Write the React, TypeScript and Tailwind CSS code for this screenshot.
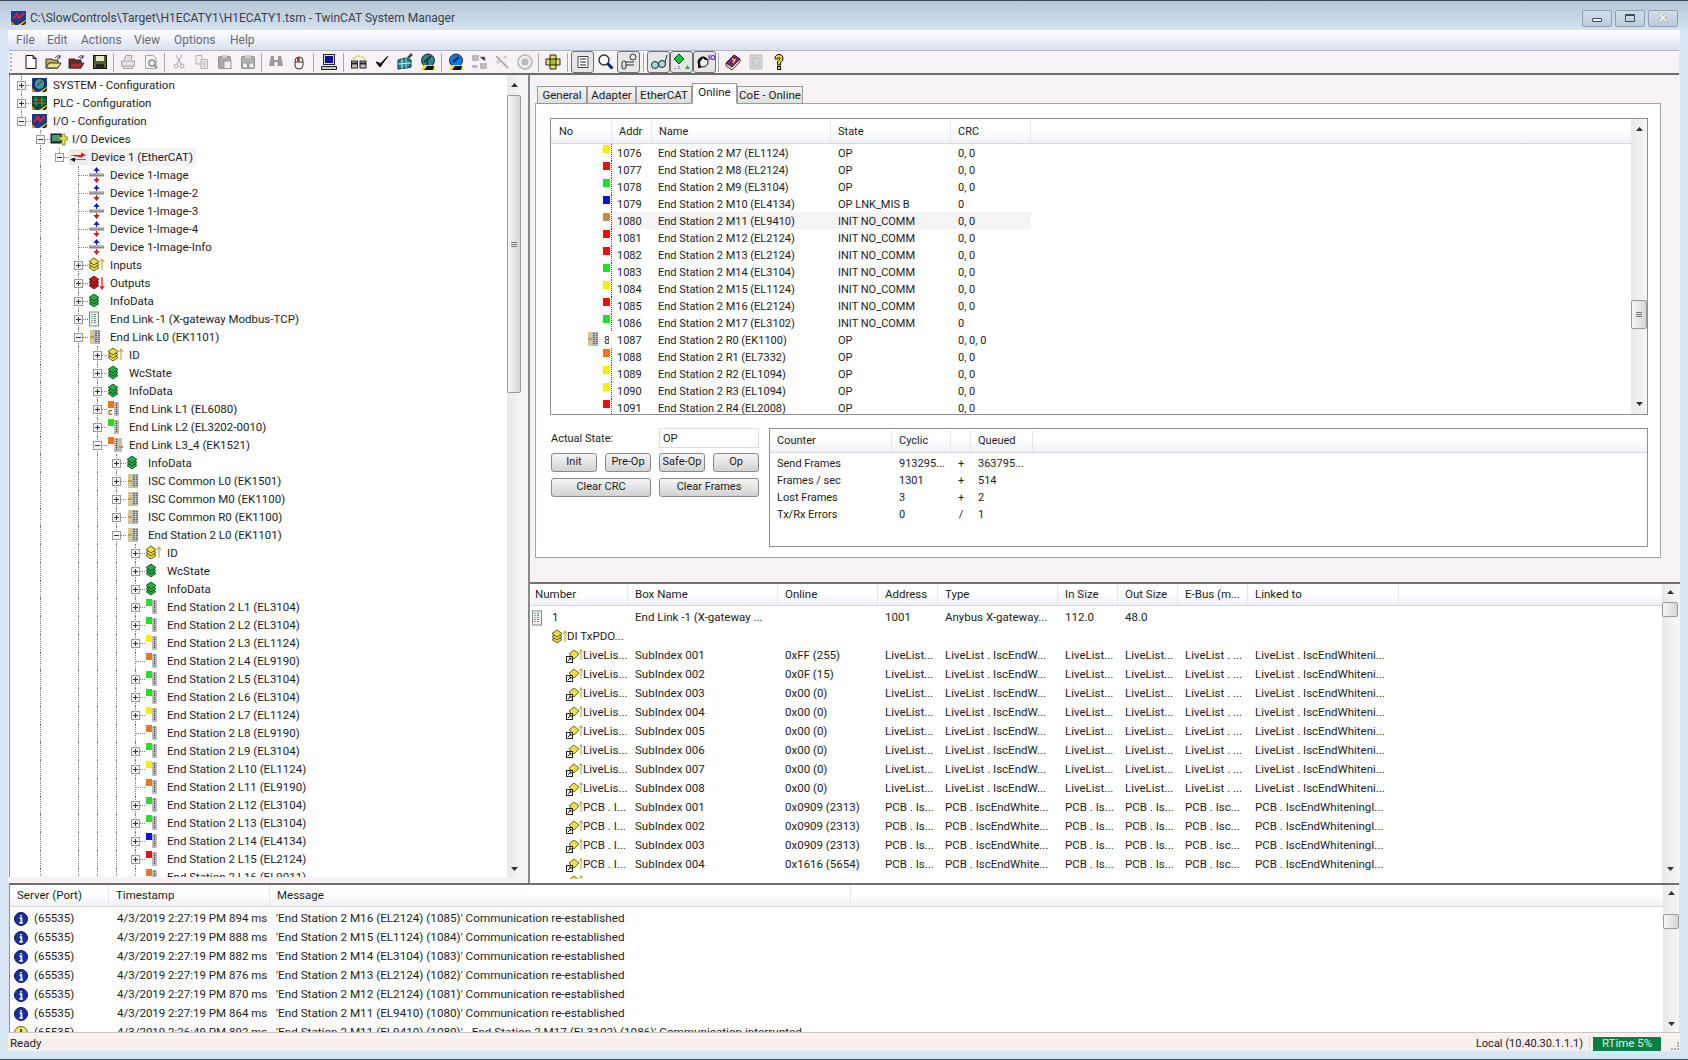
import type { ReactNode } from "react";

type TreeRow = { l: number; t: string; e?: "+" | "-"; i: string };

const st = (n: number, chip: string, part: string, e: boolean = true): TreeRow => ({ l: 6, t: `End Station 2 L${n} (${part})`, e: e ? "+" : undefined, i: chip });

const tree: TreeRow[] = [
  { l: 0, t: "SYSTEM - Configuration", e: "+", i: "system" },
  { l: 0, t: "PLC - Configuration", e: "+", i: "plc" },
  { l: 0, t: "I/O - Configuration", e: "-", i: "io" },
  { l: 1, t: "I/O Devices", e: "-", i: "devices" },
  { l: 2, t: "Device 1 (EtherCAT)", e: "-", i: "ethercat" },
  { l: 3, t: "Device 1-Image", i: "image" },
  { l: 3, t: "Device 1-Image-2", i: "image" },
  { l: 3, t: "Device 1-Image-3", i: "image" },
  { l: 3, t: "Device 1-Image-4", i: "image" },
  { l: 3, t: "Device 1-Image-Info", i: "image" },
  { l: 3, t: "Inputs", e: "+", i: "inputs" },
  { l: 3, t: "Outputs", e: "+", i: "outputs" },
  { l: 3, t: "InfoData", e: "+", i: "green" },
  { l: 3, t: "End Link -1 (X-gateway Modbus-TCP)", e: "+", i: "gateway" },
  { l: 3, t: "End Link L0 (EK1101)", e: "-", i: "mod" },
  { l: 4, t: "ID", e: "+", i: "inputs" },
  { l: 4, t: "WcState", e: "+", i: "green" },
  { l: 4, t: "InfoData", e: "+", i: "green" },
  { l: 4, t: "End Link L1 (EL6080)", e: "+", i: "coupler" },
  { l: 4, t: "End Link L2 (EL3202-0010)", e: "+", i: "#22e022" },
  { l: 4, t: "End Link L3_4 (EK1521)", e: "-", i: "fiber" },
  { l: 5, t: "InfoData", e: "+", i: "green" },
  { l: 5, t: "ISC Common L0 (EK1501)", e: "+", i: "mod" },
  { l: 5, t: "ISC Common M0 (EK1100)", e: "+", i: "mod" },
  { l: 5, t: "ISC Common R0 (EK1100)", e: "+", i: "mod" },
  { l: 5, t: "End Station 2 L0 (EK1101)", e: "-", i: "mod" },
  { l: 6, t: "ID", e: "+", i: "inputs" },
  { l: 6, t: "WcState", e: "+", i: "green" },
  { l: 6, t: "InfoData", e: "+", i: "green" },
  st(1, "#22e022", "EL3104"),
  st(2, "#22e022", "EL3104"),
  st(3, "#f5f000", "EL1124"),
  st(4, "#f97316", "EL9190", false),
  st(5, "#22e022", "EL3104"),
  st(6, "#22e022", "EL3104"),
  st(7, "#f5f000", "EL1124"),
  st(8, "#f97316", "EL9190", false),
  st(9, "#22e022", "EL3104"),
  st(10, "#f5f000", "EL1124"),
  st(11, "#f97316", "EL9190", false),
  st(12, "#22e022", "EL3104"),
  st(13, "#22e022", "EL3104"),
  st(14, "#1010e0", "EL4134"),
  st(15, "#e81010", "EL2124"),
  st(16, "#f97316", "EL9011", false),
];

const openAtEnd = [1, 3, 4, 5, 6];

const hasLater = (i: number, l: number) => {
  for (let j = i + 1; j < tree.length; j++) {
    if (tree[j].l < l) return false;
    if (tree[j].l === l) return true;
  }
  return openAtEnd.includes(l);
};

const slaves: [string, string, string, string, string][] = [
  ["#f5f000", "1076", "End Station 2 M7 (EL1124)", "OP", "0, 0"],
  ["#e81010", "1077", "End Station 2 M8 (EL2124)", "OP", "0, 0"],
  ["#22e022", "1078", "End Station 2 M9 (EL3104)", "OP", "0, 0"],
  ["#1010e0", "1079", "End Station 2 M10 (EL4134)", "OP LNK_MIS B", "0"],
  ["#c08a50", "1080", "End Station 2 M11 (EL9410)", "INIT NO_COMM", "0, 0"],
  ["#e81010", "1081", "End Station 2 M12 (EL2124)", "INIT NO_COMM", "0, 0"],
  ["#e81010", "1082", "End Station 2 M13 (EL2124)", "INIT NO_COMM", "0, 0"],
  ["#22e022", "1083", "End Station 2 M14 (EL3104)", "INIT NO_COMM", "0, 0"],
  ["#f5f000", "1084", "End Station 2 M15 (EL1124)", "INIT NO_COMM", "0, 0"],
  ["#e81010", "1085", "End Station 2 M16 (EL2124)", "INIT NO_COMM", "0, 0"],
  ["#22e022", "1086", "End Station 2 M17 (EL3102)", "INIT NO_COMM", "0"],
  ["mod", "1087", "End Station 2 R0 (EK1100)", "OP", "0, 0, 0"],
  ["#f97316", "1088", "End Station 2 R1 (EL7332)", "OP", "0, 0"],
  ["#f5f000", "1089", "End Station 2 R2 (EL1094)", "OP", "0, 0"],
  ["#f5f000", "1090", "End Station 2 R3 (EL1094)", "OP", "0, 0"],
  ["#e81010", "1091", "End Station 2 R4 (EL2008)", "OP", "0, 0"],
];

const lowerCols = ["w-[98px]", "w-[150px]", "w-[100px]", "w-[60px]", "w-[120px]", "w-[60px]", "w-[60px]", "w-[70px]", "w-[151px]"];
const lowerHead = ["Number", "Box Name", "Online", "Address", "Type", "In Size", "Out Size", "E-Bus (m...", "Linked to"];

const live = (n: number, online: string) => [`SubIndex 00${n}`, online, "LiveList...", "LiveList . IscEndW...", "LiveList...", "LiveList...", "LiveList . ...", "LiveList . IscEndWhiteni..."];
const pcb = (n: number, online: string) => [`SubIndex 00${n}`, online, "PCB . Is...", "PCB . IscEndWhite...", "PCB . Is...", "PCB . Is...", "PCB . Isc...", "PCB . IscEndWhiteningI..."];

const vars: [string, string[]][] = [
  ["LiveLis...", live(1, "0xFF (255)")],
  ["LiveLis...", live(2, "0x0F (15)")],
  ["LiveLis...", live(3, "0x00 (0)")],
  ["LiveLis...", live(4, "0x00 (0)")],
  ["LiveLis...", live(5, "0x00 (0)")],
  ["LiveLis...", live(6, "0x00 (0)")],
  ["LiveLis...", live(7, "0x00 (0)")],
  ["LiveLis...", live(8, "0x00 (0)")],
  ["PCB . I...", pcb(1, "0x0909 (2313)")],
  ["PCB . I...", pcb(2, "0x0909 (2313)")],
  ["PCB . I...", pcb(3, "0x0909 (2313)")],
  ["PCB . I...", pcb(4, "0x1616 (5654)")],
];

const logs: [string, string][] = [
  ["894", "'End Station 2 M16 (EL2124) (1085)' Communication re-established"],
  ["888", "'End Station 2 M15 (EL1124) (1084)' Communication re-established"],
  ["882", "'End Station 2 M14 (EL3104) (1083)' Communication re-established"],
  ["876", "'End Station 2 M13 (EL2124) (1082)' Communication re-established"],
  ["870", "'End Station 2 M12 (EL2124) (1081)' Communication re-established"],
  ["864", "'End Station 2 M11 (EL9410) (1080)' Communication re-established"],
];

const counters = [
  ["Send Frames", "913295...", "+", "363795..."],
  ["Frames / sec", "1301", "+", "514"],
  ["Lost Frames", "3", "+", "2"],
  ["Tx/Rx Errors", "0", "/", "1"],
];

const Stack = ({ color, dark, arrow }: { color: string; dark: string; arrow?: string }) => (
  <svg width="18" height="16" viewBox="0 0 18 16">
    {[6, 3, 0].map((y) => (
      <path key={y} d={`M6 ${y + 1} L11 ${y + 4.5} L6 ${y + 8} L1 ${y + 4.5} Z`} fill={color} stroke={dark} strokeWidth="0.8" />
    ))}
    {arrow && <path d={arrow === "#c8b040" ? "M14 13 V3 M12 5 L14 2 L16 5" : "M14 2 V13 M12 11 L14 14 L16 11"} stroke={arrow} strokeWidth="1.2" fill="none" />}
  </svg>
);

const ModIcon = () => (
  <svg width="18" height="16" viewBox="0 0 18 16">
    <rect x="2" y="1" width="4" height="14" fill="#d8c78c" />
    <rect x="6" y="1" width="6" height="14" fill="#b9b9b9" />
    <path d="M8 2 V14 M11 2 V14" stroke="#333" strokeWidth="1.2" strokeDasharray="1 1" />
    <rect x="2" y="7" width="4" height="2" fill="#b0a060" />
  </svg>
);

const GatewayIcon = () => (
  <svg width="18" height="16" viewBox="0 0 18 16">
    <rect x="1.5" y="1" width="9" height="14" fill="#eef2ee" stroke="#808a80" />
    <path d="M4 3 V13" stroke="#1ca04a" strokeWidth="1.2" strokeDasharray="1 1" />
    <path d="M7 3 V13" stroke="#333" strokeWidth="1.2" strokeDasharray="1 1" />
  </svg>
);

const Chip = ({ color, mark }: { color: string; mark?: string }) => (
  <svg width="18" height="16" viewBox="0 0 18 16">
    <rect x="1" y="0" width="6" height="7" fill={color} />
    <rect x="7" y="1" width={mark === "fiber" ? 8 : 5} height="14" fill="#bdbdbd" />
    <path d="M9.5 2 V14" stroke="#333" strokeWidth="1.2" strokeDasharray="1 1" />
    {mark === "c" && <text x="1" y="14" fontSize="9" fill="#111" fontFamily="Liberation Sans">c</text>}
    {mark === "fiber" && <path d="M12 10 H16" stroke="#d09000" strokeWidth="2" />}
  </svg>
);

const TcIcon = ({ kind }: { kind: string }) => (
  <svg width="18" height="16" viewBox="0 0 18 16">
    <rect x="1" y="1" width="15" height="14" fill={kind === "plc" ? "#0b4a30" : "#1c3a8a"} />
    {kind === "system" && <circle cx="8.5" cy="7" r="5.5" fill="#2aa0a8" stroke="#111" />}
    {kind === "system" && <path d="M6 9 L11 4" stroke="#d01818" strokeWidth="1.5" />}
    {kind === "plc" && <path d="M2 5 H15 M2 8 H15 M5 2 V11 M11 2 V11" stroke="#28b85a" strokeWidth="1.2" />}
    {kind === "plc" && <path d="M3 8 L8 5 L13 8" stroke="#e01818" strokeWidth="1.2" fill="none" />}
    {kind === "io" && <path d="M3 9 L7 4 L9 8 L14 3" stroke="#f02020" strokeWidth="2" fill="none" />}
    <path d="M8 15 L16 15 L16 10 Z" fill="#f5e000" />
    <path d="M1 15 L1 11 L5 15 Z" fill="#e09010" />
    <path d="M11 15 L16 11 L16 13 L14 15 Z" fill="#111" />
  </svg>
);

const DevicesIcon = () => (
  <svg width="18" height="16" viewBox="0 0 18 16">
    <rect x="1" y="3" width="10" height="9" fill="#0d5a34" stroke="#111" />
    <path d="M2 5 H10 M2 7 H10 M2 9 H10" stroke="#9ad5ae" />
    <path d="M9 6 H12 V3 H15 V6 H18 V9 H15 V14 H12 V9 H9 Z" fill="#e8e040" stroke="#555" strokeWidth="0.6" />
  </svg>
);

const EthercatIcon = () => (
  <svg width="18" height="16" viewBox="0 0 18 16">
    <path d="M1 6 H12 V3.5 L17 6 L12 8.5 Z" fill="#e01818" />
    <path d="M17 10.5 H6 V8.5 L1 10.5 L6 13 V11 H17 Z" fill="#111" />
  </svg>
);

const ImageIcon = () => (
  <svg width="18" height="16" viewBox="0 0 18 16">
    <rect x="1" y="6.5" width="15" height="3" fill="#8a8a8a" />
    <rect x="1" y="6.5" width="15" height="1" fill="#c4c4c4" />
    <path d="M8.5 6 V3 M6.5 3.5 L8.5 1 L10.5 3.5 Z" stroke="#1818d0" fill="#1818d0" strokeWidth="1.2" />
    <path d="M8.5 10 V13 M6.5 12.5 L8.5 15 L10.5 12.5 Z" stroke="#d01818" fill="#d01818" strokeWidth="1.2" />
  </svg>
);

const nodeIcon = (i: string): ReactNode => {
  if (i.startsWith("#")) return <Chip color={i} />;
  if (i === "coupler") return <Chip color="#f97316" mark="c" />;
  if (i === "fiber") return <Chip color="#f97316" mark="fiber" />;
  if (i === "system" || i === "plc" || i === "io") return <TcIcon kind={i} />;
  if (i === "devices") return <DevicesIcon />;
  if (i === "ethercat") return <EthercatIcon />;
  if (i === "image") return <ImageIcon />;
  if (i === "inputs") return <Stack color="#eee040" dark="#3a3418" arrow="#c8b040" />;
  if (i === "outputs") return <Stack color="#d01818" dark="#3a0808" arrow="#e01010" />;
  if (i === "green") return <Stack color="#22b040" dark="#083a16" />;
  if (i === "gateway") return <GatewayIcon />;
  return <ModIcon />;
};

const Expander = ({ kind }: { kind: "+" | "-" }) => (
  <svg width="9" height="9" viewBox="0 0 9 9" className="absolute left-[5px] top-[5px]">
    <rect x="0.5" y="0.5" width="8" height="8" fill="#f4f4f4" stroke="#9a9a9a" />
    <path d="M2 4.5 H7" stroke="#333" />
    {kind === "+" && <path d="M4.5 2 V7" stroke="#333" />}
  </svg>
);

const Arrow = ({ up }: { up?: boolean }) => (
  <div className="h-[16px] flex items-center justify-center">
    <svg width="7" height="4" viewBox="0 0 7 4">
      <path d={up ? "M0 4 L3.5 0 L7 4 Z" : "M0 0 L3.5 4 L7 0 Z"} fill="#333" />
    </svg>
  </div>
);

const ScrollBar = ({ thumb, size, width, pad, grip }: { thumb: string; size: string; width: string; pad?: string; grip?: boolean }) => (
  <div className={`${width} ${pad ?? ""} shrink-0 bg-gradient-to-r from-[#e8e8e8] to-[#f6f6f6] flex flex-col`}>
    <Arrow up />
    <div className="flex-1">
      <div className={`${thumb} ${size} border border-[#9a9a9a] rounded-[2px] bg-gradient-to-r from-[#f8f8f8] to-[#d4d4d4] flex flex-col items-center justify-center gap-[1px]`}>
        {grip && (
          <>
            <div className="w-[6px] h-[1px] bg-[#777]" />
            <div className="w-[6px] h-[1px] bg-[#777]" />
            <div className="w-[6px] h-[1px] bg-[#777]" />
          </>
        )}
      </div>
    </div>
    <Arrow />
  </div>
);

const Tree = () => (
  <div className="flex-1 overflow-hidden bg-white pt-[1px]">
    {tree.map((r, i) => (
      <div key={i} className="flex h-[18px] pl-[2px] items-center">
        {Array.from({ length: r.l }).map((_, k) => (
          <div key={k} className="w-[19px] h-full shrink-0 flex justify-center">
            {hasLater(i, k) && <div className="h-full border-l border-dotted border-[#808080]" />}
          </div>
        ))}
        <div className="relative w-[19px] h-full shrink-0">
          <div className={`absolute left-[9px] top-0 border-l border-dotted border-[#808080] ${hasLater(i, r.l) ? "h-[18px]" : "h-[9px]"}`} />
          <div className="absolute left-[9px] top-[9px] w-[10px] border-t border-dotted border-[#808080]" />
          {r.e && <Expander kind={r.e} />}
        </div>
        <div className={`w-[18px] h-[16px] shrink-0 ${r.i === "ethercat" ? "bg-[#eceaec]" : ""}`}>{nodeIcon(r.i)}</div>
        <span className={`pl-[4px] pr-[3px] leading-[18px] whitespace-nowrap ${r.i === "ethercat" ? "bg-[#f4f2f4]" : ""}`}>{r.t}</span>
      </div>
    ))}
  </div>
);

const HeadCell = ({ w, pl, children }: { w: string; pl?: string; children?: ReactNode }) => (
  <div className={`${w} ${pl ?? "pl-[7px]"} shrink-0 h-full flex items-center border-r border-[#e6e6e8] whitespace-nowrap`}>{children}</div>
);

const btn = "h-[19px] border border-[#8a8a8a] rounded-[3px] bg-gradient-to-b from-[#f6f6f6] to-[#d2d2d2] flex items-center justify-center";

const SlaveList = () => (
  <div className="h-[297px] border border-[#8f8f8f] flex text-[11px]">
    <div className="flex-1 flex flex-col overflow-hidden">
      <div className="h-[25px] shrink-0 pt-[2px] flex bg-gradient-to-b from-white from-[40%] to-[#f1f2f8] border-b border-[#d8d8dc]">
        <HeadCell w="w-[61px]"><span className="pl-[1px]">No</span></HeadCell>
        <HeadCell w="w-[40px]">Addr</HeadCell>
        <HeadCell w="w-[179px]">Name</HeadCell>
        <HeadCell w="w-[120px]">State</HeadCell>
        <HeadCell w="w-[80px]">CRC</HeadCell>
      </div>
      {slaves.map(([icon, addr, name, state, crc]) => (
        <div key={addr} className="h-[17px] shrink-0 flex">
          <div className="w-[61px] shrink-0 flex justify-end">
            {icon === "mod" ? (
              <div className="flex h-[17px] mr-[3px] leading-[19px]">
                <ModIcon />
                <span className="w-[5px] overflow-hidden">8</span>
              </div>
            ) : (
              <div className="flex">
                <div className="w-[7px] h-[8px] mt-[1px]" style={{ background: icon }} />
                <div className="h-full ml-[1px] border-l border-dotted border-[#444]" />
              </div>
            )}
          </div>
          <div className={`flex ${addr === "1080" ? "bg-[#f6f3f5]" : ""}`}>
            <div className="w-[40px] pl-[5px] leading-[19px]">{addr}</div>
            <div className="w-[179px] pl-[6px] leading-[19px] whitespace-nowrap">{name}</div>
            <div className="w-[120px] pl-[7px] leading-[19px] whitespace-nowrap">{state}</div>
            <div className="w-[80px] pl-[7px] leading-[19px]">{crc}</div>
          </div>
        </div>
      ))}
    </div>
    <ScrollBar width="w-[16px]" pad="pt-[2px] pb-[2px]" thumb="mt-[163px]" size="h-[29px]" grip />
  </div>
);

const Controls = () => (
  <div className="flex mt-[13px] text-[11px]">
    <div className="w-[208px] ml-[1px] shrink-0">
      <div className="flex items-center h-[20px]">
        <span className="w-[108px] pt-[2px]">Actual State:</span>
        <div className="w-[100px] h-[20px] border border-[#dcdcdc] pl-[3px] pt-[2px] flex items-center">OP</div>
      </div>
      <div className="grid grid-cols-4 gap-x-[8px] mt-[5px]">
        <div className={btn}>Init</div>
        <div className={btn}>Pre-Op</div>
        <div className={btn}>Safe-Op</div>
        <div className={btn}>Op</div>
      </div>
      <div className="grid grid-cols-2 gap-x-[8px] mt-[6px]">
        <div className={btn}>Clear CRC</div>
        <div className={btn}>Clear Frames</div>
      </div>
    </div>
    <div className="ml-[10px] flex-1 h-[119px] border border-[#8f8f8f]">
      <div className="h-[24px] pt-[2px] flex bg-gradient-to-b from-white from-[40%] to-[#f1f2f8] border-b border-[#d8d8dc]">
        <HeadCell w="w-[122px]">Counter</HeadCell>
        <HeadCell w="w-[59px]">Cyclic</HeadCell>
        <HeadCell w="w-[20px]" />
        <HeadCell w="w-[62px]">Queued</HeadCell>
      </div>
      <div className="pt-[2px]">
        {counters.map(([a, b, c, d]) => (
          <div key={a} className="flex h-[17px] leading-[17px]">
            <div className="w-[122px] pl-[7px]">{a}</div>
            <div className="w-[59px] pl-[7px]">{b}</div>
            <div className="w-[20px] text-center">{c}</div>
            <div className="w-[62px] pl-[7px]">{d}</div>
          </div>
        ))}
      </div>
    </div>
  </div>
);

const Tabs = () => (
  <div className="flex items-end h-[21px] ml-[2px] relative top-[1px]">
    {["General", "Adapter", "EtherCAT"].map((t, i) => (
      <div key={t} className={`h-[18px] pt-[1px] ${["w-[50px]", "w-[49px]", "w-[56px]"][i]} border border-[#9a9a9a] bg-gradient-to-b from-[#f4f4f4] to-[#dedede] flex items-center justify-center`}>{t}</div>
    ))}
    <div className="h-[21px] w-[45px] border border-[#9a9a9a] border-b-white bg-white flex items-center justify-center pb-[2px]">Online</div>
    <div className="h-[18px] pt-[1px] w-[66px] border border-[#9a9a9a] bg-gradient-to-b from-[#f4f4f4] to-[#dedede] flex items-center justify-center">CoE - Online</div>
  </div>
);

const VarIcon = () => (
  <svg width="18" height="16" viewBox="0 0 18 16" className="shrink-0">
    <path d="M9 2 L14 6 L9 11 L4 6 Z" fill="#eee040" stroke="#4a4420" strokeWidth="0.8" />
    <rect x="1.5" y="8.5" width="6" height="6" fill="#fff" stroke="#222" />
    <path d="M3 13 L6 10 M4 10 H6 V12" stroke="#222" fill="none" />
    <path d="M16 12 V2 M14.5 4 L16 1.5 L17.5 4" stroke="#b8a030" fill="none" />
  </svg>
);

const LowerTable = () => (
  <div className="h-[301px] border-t-2 border-[#707070] bg-white flex">
    <div className="flex-1 overflow-hidden">
      <div className="h-[22px] flex bg-gradient-to-b from-white from-[40%] to-[#f1f2f8] border-b border-[#d8d8dc]">
        {lowerHead.map((h, i) => <HeadCell key={h} w={lowerCols[i]} pl={i === 0 ? "pl-[5px]" : undefined}>{h}</HeadCell>)}
      </div>
      <div className="h-[19px] mt-[2px] flex items-center whitespace-nowrap">
        <div className={`${lowerCols[0]} flex items-center pl-[1px]`}>
          <div className="w-[21px] h-[16px] overflow-hidden"><GatewayIcon /></div>
          <span>1</span>
        </div>
        <div className={`${lowerCols[1]} pl-[7px]`}>End Link -1 (X-gateway ...</div>
        <div className={lowerCols[2]} />
        <div className={`${lowerCols[3]} pl-[7px]`}>1001</div>
        <div className={`${lowerCols[4]} pl-[7px]`}>Anybus X-gateway...</div>
        <div className={`${lowerCols[5]} pl-[7px]`}>112.0</div>
        <div className={`${lowerCols[6]} pl-[7px]`}>48.0</div>
      </div>
      <div className="h-[19px] flex items-center pl-[21px] whitespace-nowrap">
        <div className="w-[16px] h-[16px] overflow-hidden"><Stack color="#eee040" dark="#3a3418" arrow="#c8b040" /></div>
        <span>DI TxPDO...</span>
      </div>
      {vars.map(([name, cells], i) => (
        <div key={i} className="h-[19px] flex items-center whitespace-nowrap">
          <div className={`${lowerCols[0]} flex items-center pl-[35px]`}>
            <VarIcon />
            <span>{name}</span>
          </div>
          {cells.map((c, k) => (
            <div key={k} className={`${lowerCols[k + 1]} pl-[7px]`}>{c}</div>
          ))}
        </div>
      ))}
      <div className="h-[5px] pl-[35px] overflow-hidden"><VarIcon /></div>
    </div>
    <ScrollBar width="w-[16px]" pad="pb-[6px]" thumb="mt-[2px]" size="h-[15px]" />
    <div className="w-[2px] bg-[#f6f2f5]" />
  </div>
);

const InfoIcon = ({ warn }: { warn?: boolean }) => (
  <svg width="14" height="14" viewBox="0 0 14 14" className="shrink-0">
    <circle cx="7" cy="7" r="6.5" fill={warn ? "#f5ea50" : "#1a2fa0"} stroke={warn ? "#555" : "#0a1560"} />
    {warn ? <path d="M7 3 V8 M7 10 V11" stroke="#222" strokeWidth="1.6" /> : <path d="M7 3 V4.6 M5.6 6.2 H7.4 V10.4 M5.4 10.8 H8.8" stroke="#fff" strokeWidth="1.7" fill="none" />}
  </svg>
);

const LogRow = ({ warn, time, msg }: { warn?: boolean; time: string; msg: string }) => (
  <div className="h-[19px] shrink-0 flex items-center whitespace-nowrap">
    <div className="w-[99px] flex items-center pl-[4px] gap-[6px]">
      <InfoIcon warn={warn} />
      <span>(65535)</span>
    </div>
    <div className="w-[161px] pl-[8px]">{time}</div>
    <div className="pl-[6px] text-[11.7px]">{msg}</div>
  </div>
);

const Log = () => (
  <div className="h-[149px] flex border-t-2 border-[#707070] ml-[1px] mr-[1px] border-l border-l-[#8f8f8f] bg-white">
    <div className="flex-1 overflow-hidden flex flex-col">
      <div className="h-[22px] shrink-0 flex bg-gradient-to-b from-white from-[40%] to-[#f1f2f8] border-b border-[#d8d8dc]">
        <HeadCell w="w-[99px]">Server (Port)</HeadCell>
        <HeadCell w="w-[161px]">Timestamp</HeadCell>
        <HeadCell w="w-[581px]">Message</HeadCell>
      </div>
      <div className="h-[2px] shrink-0" />
      {logs.map(([ms, m]) => <LogRow key={ms} time={`4/3/2019 2:27:19 PM ${ms} ms`} msg={m} />)}
      <LogRow warn time="4/3/2019 2:26:49 PM 892 ms" msg="'End Station 2 M11 (EL9410) (1080)' - End Station 2 M17 (EL3102) (1086)' Communication interrupted" />
    </div>
    <ScrollBar width="w-[16px]" thumb="mt-[13px]" size="h-[15px]" />
  </div>
);

const ToolIcon = ({ name }: { name: string }) => {
  switch (name) {
    case "new": return <svg width="16" height="16" viewBox="0 0 16 16"><path d="M3 1.5 H10 L13 4.5 V14.5 H3 Z M10 1.5 V4.5 H13" fill="#fff" stroke="#111" /></svg>;
    case "open": return <svg width="18" height="16" viewBox="0 0 18 16"><path d="M1 14 V5 H7 V6 H13 V14 Z" fill="#b9b258" stroke="#333" /><path d="M1 14 L4 9 H16 L13 14 Z" fill="#e8e28c" stroke="#333" /><path d="M10 4 Q13 0 15 3 M15 1 V4 H12" stroke="#333" fill="none" /></svg>;
    case "open2": return <svg width="18" height="16" viewBox="0 0 18 16"><path d="M1 14 V5 H7 V6 H13 V14 Z" fill="#7a1c20" stroke="#333" /><path d="M1 14 L4 9 H16 L13 14 Z" fill="#b02a30" stroke="#333" /><path d="M10 4 Q13 0 15 3 M15 1 V4 H12" stroke="#333" fill="none" /></svg>;
    case "save": return <svg width="16" height="16" viewBox="0 0 16 16"><rect x="1.5" y="1.5" width="13" height="13" fill="#556030" stroke="#111" /><rect x="4" y="2" width="8" height="5" fill="#e8e8c8" /><rect x="4" y="10" width="8" height="4.5" fill="#222" /></svg>;
    case "print": return <svg width="16" height="16" viewBox="0 0 16 16"><path d="M4 6 L6 1.5 H12 L11 6 M1.5 7 H14.5 V12 H1.5 Z M3.5 12 V14.5 H12.5 V12" fill="#e4e4e4" stroke="#a0a0a0" /></svg>;
    case "preview": return <svg width="16" height="16" viewBox="0 0 16 16"><path d="M2.5 1.5 H10 L13 4 V14.5 H2.5 Z" fill="#f4f4f4" stroke="#a8a8a8" /><circle cx="9" cy="9" r="3" fill="none" stroke="#909090" strokeWidth="1.5" /><path d="M11 11 L14 14" stroke="#909090" strokeWidth="2" /></svg>;
    case "cut": return <svg width="14" height="16" viewBox="0 0 14 16"><path d="M4 1 L9 10 M10 1 L5 10" stroke="#a8a8a8" /><circle cx="4" cy="12" r="2" fill="none" stroke="#a8a8a8" /><circle cx="10" cy="12" r="2" fill="none" stroke="#a8a8a8" /></svg>;
    case "copy": return <svg width="16" height="16" viewBox="0 0 16 16"><path d="M2 1.5 H8 V10 H2 Z" fill="#eee" stroke="#b0b0b0" /><path d="M7 5.5 H13.5 V14.5 H7 Z M8.5 8 H12 M8.5 10 H12 M8.5 12 H12" fill="#eee" stroke="#b0b0b0" /></svg>;
    case "paste": return <svg width="16" height="16" viewBox="0 0 16 16"><rect x="1.5" y="2.5" width="12" height="12" rx="1" fill="#a8a8a8" stroke="#909090" /><rect x="5" y="1" width="5" height="3" fill="#ccc" /><rect x="7" y="7" width="7" height="7.5" fill="#eee" stroke="#999" /></svg>;
    case "paste2": return <svg width="16" height="16" viewBox="0 0 16 16"><rect x="1.5" y="2.5" width="13" height="12" rx="1" fill="#b0b0b0" stroke="#909090" /><rect x="5" y="1" width="6" height="3" fill="#ccc" /><rect x="2.5" y="9" width="5" height="5" fill="#eee" stroke="#999" /><rect x="9" y="9" width="5" height="5" fill="#eee" stroke="#999" /></svg>;
    case "find": return <svg width="16" height="16" viewBox="0 0 16 16"><path d="M3 2 H6 V6 H10 V2 H13 L15 12 H9.5 V8 H6.5 V12 H1 Z" fill="#9a9a9a" /></svg>;
    case "mouse": return <svg width="14" height="16" viewBox="0 0 14 16"><rect x="3" y="3" width="8" height="12" rx="4" fill="#fff" stroke="#333" /><path d="M3 8 H11 M7 3 V8" stroke="#333" /><rect x="5" y="3.5" width="2" height="4" fill="#c82020" /></svg>;
    case "monitor": return <svg width="18" height="18" viewBox="0 0 18 18"><rect x="3.5" y="1.5" width="11" height="10" fill="#ddd" stroke="#222" /><rect x="5" y="3" width="8" height="7" fill="#1010a0" /><path d="M1.5 13.5 H16.5 V16.5 H1.5 Z" fill="#ccc" stroke="#222" /></svg>;
    case "blocks": return <svg width="18" height="16" viewBox="0 0 18 16"><rect x="1.5" y="7" width="6" height="7" fill="#c4c0a0" stroke="#222040" /><rect x="10" y="7" width="6" height="7" fill="#c4c0a0" stroke="#222040" /><path d="M1.5 9.5 H7.5 M10 9.5 H16" stroke="#222040" strokeWidth="2" /><path d="M3 5 Q9 -1 15 5" stroke="#d0d020" strokeDasharray="2 1" fill="none" strokeWidth="1.5" /></svg>;
    case "check": return <svg width="16" height="16" viewBox="0 0 16 16"><path d="M2 8 L6 13 L14 2 L6.5 9.5 Z" fill="#111" stroke="#111" /></svg>;
    case "gear": return <svg width="18" height="18" viewBox="0 0 18 18"><path d="M2 7 L10 5 V15 L2 16 Z M10 5 L15 7 V14 L10 15" fill="#1f8a90" stroke="#123" /><path d="M2 11 L15 10 M6 6 V16 M10 5 V15" stroke="#bfe" /><path d="M12 5 L16 1" stroke="#444" strokeWidth="2.5" /></svg>;
    case "tc": return <svg width="18" height="18" viewBox="0 0 18 18"><circle cx="9" cy="7.5" r="6.5" fill="#1f8a90" stroke="#222" /><path d="M5 9 L12 3 M8 13 L9 5" stroke="#222" strokeWidth="1.5" /><path d="M2 17 L5 12 H15 L17 17 Z" fill="#f5e000" /><path d="M5 17 L8 13 H15 L14 17 Z" fill="#111" /></svg>;
    case "globe": return <svg width="18" height="18" viewBox="0 0 18 18"><circle cx="9" cy="7.5" r="6.5" fill="#1878d8" stroke="#102060" /><path d="M6 9 L12 4" stroke="#102060" strokeWidth="2" /><path d="M2 17 L5 12 H15 L17 17 Z" fill="#f5e000" /><path d="M5 17 L8 13 H15 L14 17 Z" fill="#111" /></svg>;
    case "net": return <svg width="18" height="16" viewBox="0 0 18 16"><rect x="2" y="1" width="7" height="6" fill="#bbb" /><rect x="10" y="9" width="7" height="6" fill="#bbb" /><rect x="2" y="11" width="5" height="3" fill="#bbb" /><path d="M10 3 H15 V7 M8 12 H5" stroke="#aaa" /></svg>;
    case "wand": return <svg width="18" height="16" viewBox="0 0 18 16"><path d="M3 2 L15 14" stroke="#b0b0b0" strokeWidth="2" /><path d="M12 1 V5 M14 3 H10 M3 8 H7 M5 6 V10" stroke="#c4c4c4" /></svg>;
    case "circle": return <svg width="18" height="18" viewBox="0 0 18 18"><circle cx="9" cy="9" r="7" fill="#eee" stroke="#b8b8b8" strokeWidth="1.5" /><circle cx="9" cy="9" r="3.5" fill="#b8b8b8" /></svg>;
    case "plus": return <svg width="18" height="18" viewBox="0 0 18 18"><path d="M6 2 H12 V6 H16 V12 H12 V16 H6 V12 H2 V6 H6 Z" fill="#f0e050" stroke="#222" /><path d="M6 6 H12 V12 H6 Z" fill="#a8c040" stroke="#222" /></svg>;
    case "list": return <svg width="14" height="14" viewBox="0 0 14 14"><path d="M2 1.5 H12 V12.5 H2 Z" fill="#fff" stroke="#444" /><path d="M4 4 H10 M4 7 H10 M4 10 H10" stroke="#222" /></svg>;
    case "glass": return <svg width="18" height="18" viewBox="0 0 18 18"><circle cx="7" cy="7" r="5" fill="#f4f4f4" stroke="#333" strokeWidth="1.4" /><path d="M10.5 10.5 L15.5 15.5" stroke="#102080" strokeWidth="3" /></svg>;
    case "scope": return <svg width="20" height="18" viewBox="0 0 20 18"><rect x="3" y="8" width="4" height="8" rx="2" fill="#ddd" stroke="#333" /><path d="M7 9 H15 M7 12 H15" stroke="#333" /><circle cx="14" cy="4" r="3" fill="none" stroke="#333" /></svg>;
    case "specs": return <svg width="20" height="18" viewBox="0 0 20 18"><circle cx="6" cy="12" r="3.5" fill="#a8d8d8" stroke="#223" /><circle cx="13" cy="11" r="3.5" fill="#a8d8d8" stroke="#223" /><path d="M9 11 L10 11 M16 9 L18 2" stroke="#223" fill="none" /></svg>;
    case "diamond": return <svg width="20" height="18" viewBox="0 0 20 18"><path d="M7 1 L12 6 L7 11 L2 6 Z" fill="#18c040" stroke="#0a4a1c" /><path d="M7 13 V16 M3 15 V16" stroke="#333" strokeDasharray="1 1" /><path d="M13 16 L15.5 12 L18 16 Z" fill="#18b040" /></svg>;
    case "face": return <svg width="20" height="18" viewBox="0 0 20 18"><circle cx="8" cy="9" r="5" fill="#eee" stroke="#111" /><path d="M3 8 Q8 0 13 7 L10 7 L8 5 L5 9 L6 15 H3 Z" fill="#111" /><text x="13" y="7" fontSize="7" fill="#1818c0" fontWeight="bold" fontFamily="Liberation Sans">IO</text></svg>;
    case "book": return <svg width="18" height="18" viewBox="0 0 18 18"><path d="M2 10 L10 2 L16 6 L8 15 Z" fill="#7c1f80" stroke="#301030" /><path d="M2 10 V13 L8 17 L16 9 V6 L8 14 Z" fill="#f0d8a0" stroke="#301030" strokeWidth="0.8" /><path d="M8 6 L11 7 L9 10" stroke="#f0d020" fill="none" strokeWidth="1.5" /></svg>;
    case "doc": return <svg width="16" height="18" viewBox="0 0 16 18"><rect x="2" y="2" width="12" height="14" rx="1" fill="#d4d4d4" stroke="#c0c0c0" /><path d="M5 5 H11 V13 H5 Z" fill="none" stroke="#aaa" strokeDasharray="1 1" /></svg>;
    default: return <svg width="14" height="18" viewBox="0 0 14 18"><path d="M3 6 Q3 1.5 7 1.5 Q11 1.5 11 6 Q11 8 8.5 9.5 V12 H5.5 V8.5 Q8 7.5 8 5.5 Q8 4.5 7 4.5 Q6 4.5 6 6 Z" fill="#f0e020" stroke="#111" /><rect x="5.5" y="13.5" width="3" height="3" fill="#f0e020" stroke="#111" /></svg>;
  }
};

// "|" is a plain separator, "||" the wider one
const toolbar = [
  "new", "open", "open2", "save", "|", "print", "preview", "|", "cut", "copy", "paste", "paste2", "|", "find", "mouse", "||", "monitor", "||",
  "blocks", "check", "gear", "tc", "|", "globe", "net", "wand", "circle", "|", "plus", "||", "list*", "glass", "scope*", "||", "specs*", "diamond*", "face*", "|", "book", "doc", "help",
];

const Toolbar = () => (
  <div className="h-[25px] shrink-0 mx-[1px] bg-[#f6f2f5] border-t border-[#b0b4c0] border-b-2 border-b-[#6c6c6c] flex items-center pl-[1px]">
    <div className="w-[8px] h-[18px] mr-[1px] border-l-2 border-dotted border-[#b8b8b8]" />
    {toolbar.map((t, i) =>
      t === "|" || t === "||" ? (
        <div key={i} className={`w-[1px] h-[19px] ${t === "|" ? "mx-[2px]" : "mx-[3px]"} bg-[#a8a8a8]`} />
      ) : (
        <div key={i} className={`w-[23px] h-[22px] shrink-0 flex items-center justify-center ${t.endsWith("*") ? "border border-[#707070] rounded-[3px] bg-[#e6e6e6]" : ""}`}>
          <ToolIcon name={t.replace("*", "")} />
        </div>
      ),
    )}
  </div>
);

const WinButton = ({ children }: { children: ReactNode }) => (
  <div className="w-[30px] h-[17px] border border-[#8da0b8] rounded-[2px] bg-gradient-to-b from-[#d3deea] to-[#bccbdc] flex items-center justify-center">{children}</div>
);

export default function App() {
  return (
    <div className="w-[1688px] h-[1060px] overflow-hidden flex flex-col bg-[#d6e6f4] border-t border-[#3d4a58] text-[#1c1c1c] text-[11.5px] font-['Roboto',sans-serif]">
      <div className="h-[29px] shrink-0 flex items-center pl-[10px] pr-[10px] pt-[5px] bg-gradient-to-b from-[#b6c5d6] to-[#d6e2f0] text-[12px] text-[#3a3f48]">
        <div className="w-[16px] h-[16px] mr-[4px] overflow-hidden"><TcIcon kind="io" /></div>
        <span>C:\SlowControls\Target\H1ECATY1\H1ECATY1.tsm - TwinCAT System Manager</span>
        <div className="ml-auto flex gap-[3px]">
          <WinButton><div className="w-[10px] h-[4px] border border-[#3c4c60] rounded-[1px] bg-[#eef2f6] mt-[3px]" /></WinButton>
          <WinButton><div className="w-[10px] h-[8px] border border-[#3c4c60] rounded-[1px] border-t-2" /></WinButton>
          <WinButton><span className="text-[14px] leading-none font-bold text-[#f4f6f8] [text-shadow:0_0_1px_#334]">✕</span></WinButton>
        </div>
      </div>
      <div className="flex-1 flex flex-col mx-[8px] min-h-0">
        <div className="h-[20px] shrink-0 bg-gradient-to-b from-white to-[#d9e0f2] flex items-center text-[12px] text-[#666a70]">
          <span className="ml-[8px] w-[31px]">File</span>
          <span className="w-[34px]">Edit</span>
          <span className="w-[53px]">Actions</span>
          <span className="w-[40px]">View</span>
          <span className="w-[56px]">Options</span>
          <span>Help</span>
        </div>
        <Toolbar />
        <div className="h-[808px] shrink-0 flex bg-[#f6f2f5]">
          <div className="w-[520px] shrink-0 flex flex-col">
            <div className="h-[802px] flex ml-[1px] mr-[7px] border-l border-[#8f8f8f]">
              <Tree />
              <ScrollBar width="w-[14px]" pad="pt-[2px]" thumb="mt-[2px]" size="h-[298px]" grip />
            </div>
          </div>
          <div className="flex-1 flex flex-col border-l-2 border-[#8a8a8a] min-w-0">
            <div className="h-[501px] shrink-0 pl-[5px] pr-[19px] pt-[7px]">
              <Tabs />
              <div className="h-[455px] border border-[#a4a4a4] bg-white pl-[14px] pr-[12px] pt-[14px]">
                <SlaveList />
                <Controls />
              </div>
            </div>
            <div className="h-[6px] shrink-0" />
            <LowerTable />
          </div>
        </div>
        <Log />
        <div className="h-[19px] shrink-0 flex items-center border-t border-[#c8c8c8] bg-gradient-to-b from-[#f9f0ef] to-[#f5eeee] pl-[2px] pt-[4px]">
          <span>Ready</span>
          <span className="ml-auto pr-[6px] text-[11px] border-r border-[#d8d8d8]">Local (10.40.30.1.1.1)</span>
          <div className="ml-[3px] w-[68px] h-full bg-[#0a7f42] text-[#d8f0e0] flex items-center justify-center">RTime 5%</div>
          <div className="w-[19px] h-full flex items-end justify-end pr-[1px] pb-[1px]">
            <div className="w-[8px] h-[8px] border-b-2 border-r-2 border-dotted border-[#a8b0b8]" />
          </div>
        </div>
      </div>
      <div className="h-[8px] shrink-0 border-b border-[#3d4a58]" />
    </div>
  );
}
